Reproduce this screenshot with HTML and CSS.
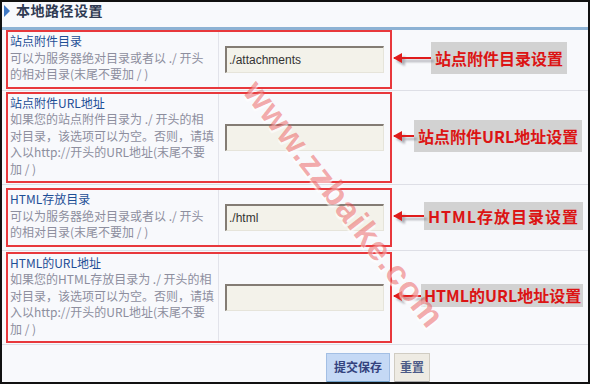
FILE: index.html
```html
<!DOCTYPE html>
<html lang="zh-CN">
<head>
  <meta charset="utf-8">
  <title>本地路径设置</title>
  <link rel="stylesheet" href="styles.css">
</head>
<body>
  <div class="panel">
    <div class="panel-head">
      <span class="tri"></span>
      <h3>本地路径设置</h3>
    </div>

    <div class="row row-first">
      <div class="mark">
        <div class="label-cell">
          <div class="name">站点附件目录</div>
          <div class="desc">可以为服务器绝对目录或者以 ./ 开头<br>的相对目录(末尾不要加 / )</div>
        </div>
        <div class="field-cell"><input class="txt" type="text" value="./attachments"></div>
      </div>
      <div class="note note-1"><span class="arrow"></span><span class="tag">站点附件目录设置</span></div>
    </div>

    <div class="row">
      <div class="mark">
        <div class="label-cell">
          <div class="name">站点附件URL地址</div>
          <div class="desc">如果您的站点附件目录为 ./ 开头的相<br>对目录，该选项可以为空。否则，请填<br>入以http://开头的URL地址(末尾不要<br>加 / )</div>
        </div>
        <div class="field-cell"><input class="txt" type="text" value=""></div>
      </div>
      <div class="note note-2"><span class="arrow"></span><span class="tag">站点附件URL地址设置</span></div>
    </div>

    <div class="row row-loose">
      <div class="mark">
        <div class="label-cell">
          <div class="name">HTML存放目录</div>
          <div class="desc">可以为服务器绝对目录或者以 ./ 开头<br>的相对目录(末尾不要加 / )</div>
        </div>
        <div class="field-cell"><input class="txt" type="text" value="./html"></div>
      </div>
      <div class="note note-3"><span class="arrow"></span><span class="tag">HTML存放目录设置</span></div>
    </div>

    <div class="row">
      <div class="mark">
        <div class="label-cell">
          <div class="name">HTML的URL地址</div>
          <div class="desc">如果您的HTML存放目录为 ./ 开头的相<br>对目录，该选项可以为空。否则，请填<br>入以http://开头的URL地址(末尾不要<br>加 / )</div>
        </div>
        <div class="field-cell"><input class="txt" type="text" value=""></div>
      </div>
      <div class="note note-4"><span class="arrow"></span><span class="tag">HTML的URL地址设置</span></div>
    </div>

    <div class="actions">
      <button class="btn btn-submit" type="button">提交保存</button>
      <button class="btn btn-reset" type="button">重置</button>
    </div>

    <div class="watermark">www.zzbaike.com</div>
  </div>
</body>
</html>
```

FILE: styles.css
```css
html, body {
  margin: 0;
  padding: 0;
  background: #f7f8fc;
}

.panel {
  position: relative;
  width: 590px;
  height: 384px;
  box-sizing: border-box;
  border: 2px solid #111;
  background: #f8f9fc;
  overflow: hidden;
  font-family: "Noto Sans CJK SC", "Liberation Sans", sans-serif;
  font-size: 12px;
}

/* header */
.panel-head {
  height: 25px;
  display: flex;
  align-items: flex-start;
  gap: 6px;
  padding-left: 2px;
  border-bottom: 3px solid #8db2d4;
}

.panel-head .tri {
  margin-top: 3px;
  width: 0;
  height: 0;
  border-left: 6px solid #3f78c4;
  border-top: 6px solid transparent;
  border-bottom: 6px solid transparent;
}

.panel-head h3 {
  margin: 0;
  font-size: 14px;
  line-height: 16px;
  font-weight: 700;
  color: #2f3a52;
  letter-spacing: 0.5px;
}

/* rows */
.row {
  display: flex;
  align-items: center;
  padding: 1px 0 1px;
  border-bottom: 1px solid #dedfe6;
}

.row-first {
  padding-top: 0;
}

.row-loose {
  padding: 3px 0 3px;
}

.mark {
  display: flex;
  width: 386px;
  box-sizing: border-box;
  margin-left: 4px;
  border: 2px solid #e8383c;
}

.label-cell {
  width: 211px;
  box-sizing: border-box;
  padding: 1px 0 4px 2px;
  border-right: 1px solid #e2e3ea;
  line-height: 16.5px;
  white-space: nowrap;
}

.label-cell .name {
  color: #1d4e96;
}

.label-cell .desc {
  color: #8d8e9e;
}

.field-cell {
  flex: 1;
  display: flex;
  align-items: center;
  padding-left: 6px;
}

.txt {
  width: 159px;
  height: 27px;
  box-sizing: border-box;
  margin: 0;
  padding: 0 0 0 2px;
  border-style: solid;
  border-width: 2px 1px 1px 2px;
  border-color: #837c74 #e6e4da #e6e4da #837c74;
  background: #f3f2ea;
  font-family: "Liberation Sans", sans-serif;
  font-size: 12px;
  color: #333;
  outline: none;
}

/* annotations */
.note {
  display: flex;
  align-items: center;
  margin-left: 2px;
  margin-top: -3px;
}

.arrow {
  position: relative;
  height: 2px;
  background: #e01c1c;
  filter: drop-shadow(3px 3px 1px rgba(80, 80, 90, 0.45));
}

.arrow::before {
  content: "";
  position: absolute;
  left: -1px;
  top: -4px;
  border-right: 9px solid #e01c1c;
  border-top: 5px solid transparent;
  border-bottom: 5px solid transparent;
}

.note-1 .arrow { width: 37px; }
.note-2 .arrow { width: 20px; }
.note-3 .arrow { width: 30px; }
.note-4 .arrow { width: 27px; }

.tag {
  display: block;
  padding: 0 4px;
  background: #d2d2d2;
  color: #dc1414;
  font-family: "Noto Sans CJK SC", sans-serif;
  font-weight: 700;
  font-size: 16px;
  line-height: 32px;
  white-space: nowrap;
}

.note-3 .tag {
  line-height: 28px;
  letter-spacing: 1px;
}

.note-4 .tag {
  line-height: 23px;
  padding: 0 2px 0 3px;
}

/* buttons */
.actions {
  display: flex;
  gap: 4px;
  padding: 8px 0 0 324px;
}

.btn {
  height: 31px;
  margin: 0;
  padding: 0 7px 3px;
  font-family: "Noto Sans CJK SC", sans-serif;
  font-size: 12px;
  font-weight: 700;
  cursor: pointer;
}

.btn-submit {
  width: 64px;
  background: #c5d9f5;
  border: 1px solid #a3bfe4;
  border-bottom: 3px solid #73a3cc;
  color: #34437e;
}

.btn-reset {
  width: 36px;
  padding: 0 0 3px;
  background: #eeebe3;
  border: 1px solid #d0ccc2;
  border-bottom: 3px solid #a9a9a9;
  color: #4d5b88;
}

/* site watermark laid over the form */
.watermark {
  position: absolute;
  left: 342px;
  top: 202px;
  transform: translate(-50%, -50%) rotate(52deg);
  font-family: "Liberation Sans", sans-serif;
  font-weight: 700;
  font-size: 34px;
  letter-spacing: 1px;
  color: rgba(232, 70, 70, 0.45);
  text-shadow: 2px 2px 1px rgba(255, 255, 255, 0.6);
  white-space: nowrap;
  pointer-events: none;
}
```
